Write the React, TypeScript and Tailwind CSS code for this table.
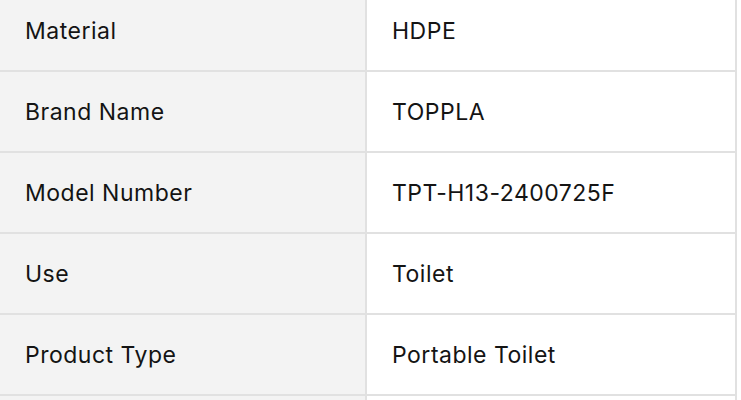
import React from "react";

const rows = [
  { label: "Material", value: "HDPE" },
  { label: "Brand Name", value: "TOPPLA" },
  { label: "Model Number", value: "TPT-H13-2400725F" },
  { label: "Use", value: "Toilet" },
  { label: "Product Type", value: "Portable Toilet" },
  { label: "", value: "" },
];

const App = () => {
  return (
    <div className="w-[741px] h-[400px] overflow-hidden bg-white" style={{ fontFamily: "Inter, 'Liberation Sans', sans-serif" }}>
      <div className="w-[737px] -mt-[9px] border-r-2 border-[#e1e1e1]">
        {rows.map((row, i) => (
          <div key={i} className="grid grid-cols-[367px_1fr] border-b-2 border-[#e1e1e1]">
            <div className="h-[79px] flex items-center pl-[25px] pt-[2px] bg-[#f3f3f3] border-r-2 border-[#e1e1e1] text-[23px] tracking-[0.5px] text-[#141414]">
              {row.label}
            </div>
            <div className="h-[79px] flex items-center pl-[25px] pt-[2px] text-[23px] tracking-[0.5px] text-[#141414]">
              {row.value}
            </div>
          </div>
        ))}
      </div>
    </div>
  );
};

export default App;
